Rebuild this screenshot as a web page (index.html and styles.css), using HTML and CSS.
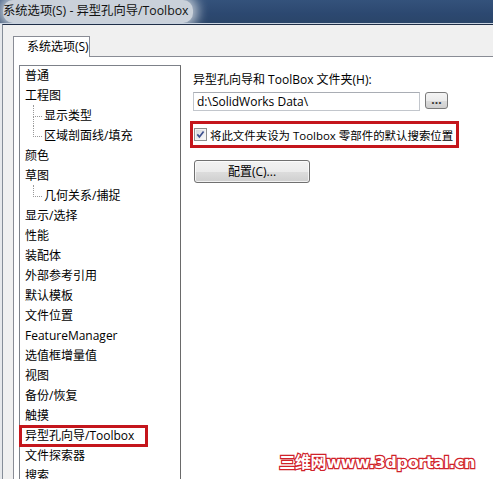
FILE: index.html
```html
<!DOCTYPE html>
<html lang="zh-CN">
<head>
<meta charset="utf-8">
<title>系统选项(S) - 异型孔向导/Toolbox</title>
<link rel="stylesheet" href="styles.css">
</head>
<body>
<div class="titlebar"><span class="title">系统选项(S) - 异型孔向导/Toolbox</span></div>
<div class="dialog">
  <div class="tabs"><div class="tab">系统选项(S)</div></div>
  <div class="panel">
    <ul class="tree">
      <li class="item">普通</li>
      <li class="item">工程图</li>
      <li class="item sub more">显示类型</li>
      <li class="item sub">区域剖面线/填充</li>
      <li class="item">颜色</li>
      <li class="item">草图</li>
      <li class="item sub">几何关系/捕捉</li>
      <li class="item">显示/选择</li>
      <li class="item">性能</li>
      <li class="item">装配体</li>
      <li class="item">外部参考引用</li>
      <li class="item">默认模板</li>
      <li class="item">文件位置</li>
      <li class="item">FeatureManager</li>
      <li class="item">选值框增量值</li>
      <li class="item">视图</li>
      <li class="item">备份/恢复</li>
      <li class="item">触摸</li>
      <li class="item marked">异型孔向导/Toolbox</li>
      <li class="item">文件探索器</li>
      <li class="item">搜索</li>
    </ul>
    <div class="settings">
      <div class="label">异型孔向导和 ToolBox 文件夹(H):</div>
      <div class="path-row">
        <div class="path-input">d:\SolidWorks Data\</div>
        <div class="browse">...</div>
      </div>
      <div class="check-box-row">
        <svg class="check" width="13" height="13" viewBox="0 0 13 13">
          <defs>
            <linearGradient id="cbg" x1="0" y1="0" x2="1" y2="1">
              <stop offset="0" stop-color="#d6d9de"/>
              <stop offset="1" stop-color="#fafafa"/>
            </linearGradient>
          </defs>
          <rect x="0.5" y="0.5" width="12" height="12" fill="#f4f4f4" stroke="#8e8f8f"/>
          <rect x="2" y="2" width="9" height="9" fill="url(#cbg)"/>
          <path d="M3.3 6.4 L5.4 8.9 L9.6 3.4" fill="none" stroke="#3c4f8e" stroke-width="1.7"/>
        </svg>
        <span class="check-text">将此文件夹设为 Toolbox 零部件的默认搜索位置</span>
      </div>
      <div class="config-btn">配置(C)...</div>
    </div>
  </div>
</div>
<div class="watermark">三维网www.3dportal.cn</div>
</body>
</html>
```
FILE: styles.css
```css
html, body {
  margin: 0;
  padding: 0;
}
body {
  width: 493px;
  height: 479px;
  overflow: hidden;
  background: #e6e8eb;
  font-family: "Open Sans", "Noto Sans CJK SC", sans-serif;
  font-size: 12px;
  color: #000;
  position: relative;
}
.titlebar {
  height: 23px;
  background: linear-gradient(180deg, #34527b 0%, #2c4870 60%, #2a4569 100%);
  border-bottom: 1px solid #c9d3e0;
  overflow: hidden;
}
.title {
  display: inline-block;
  margin-left: 3px;
  height: 23px;
  line-height: 22px;
  padding-right: 4px;
  color: #111;
  font-size: 12.3px;
  background: #cad1da;
  border-radius: 10px;
  box-shadow: 0 0 12px 5px rgba(202, 209, 218, 0.9);
}
.dialog {
  margin-left: 2px;
  border-left: 1px solid #858d98;
  border-top: 1px solid #1f2e47;
  background: #f0f0f0;
  height: 455px;
}
.tabs {
  display: flex;
  padding-top: 11px;
  padding-left: 10px;
}
.tab {
  position: relative;
  z-index: 1;
  box-sizing: border-box;
  width: 77px;
  height: 21px;
  padding-left: 13px;
  line-height: 20px;
  background: #fff;
  border: 1px solid #898c95;
  border-bottom: none;
  margin-bottom: -1px;
}
.panel {
  display: flex;
  margin-left: 10px;
  height: 430px;
  overflow: hidden;
  background: #fff;
  border-top: 1px solid #898c95;
  border-left: 1px solid #898c95;
}
.tree {
  list-style: none;
  margin: 8px 0 0 5px;
  padding: 0;
  box-sizing: border-box;
  width: 162px;
  height: 440px;
  flex: none;
  border: 1px solid #7d8189;
  border-right-color: #6a6a6a;
}
.item {
  position: relative;
  height: 20px;
  line-height: 20px;
  padding-left: 5px;
  white-space: nowrap;
}
.item.sub {
  padding-left: 24px;
}
.item.sub::before {
  content: "";
  position: absolute;
  left: 13px;
  top: -1px;
  width: 8px;
  height: 11px;
  border-left: 1px dotted #9a9a9a;
  border-bottom: 1px dotted #9a9a9a;
}
.item.sub.more::after {
  content: "";
  position: absolute;
  left: 13px;
  top: 10px;
  height: 10px;
  border-left: 1px dotted #9a9a9a;
}
.item.marked::after {
  content: "";
  position: absolute;
  left: -1px;
  top: -1px;
  width: 129px;
  height: 22px;
  box-sizing: border-box;
  border: 3px solid #c4161c;
}
.settings {
  margin-left: 12px;
  padding-top: 15px;
}
.label {
  line-height: 16px;
  white-space: nowrap;
}
.path-row {
  display: flex;
  margin-top: 4px;
}
.path-input {
  box-sizing: border-box;
  width: 227px;
  height: 19px;
  line-height: 17px;
  padding-left: 3px;
  border: 1px solid #c2c6cc;
  border-top-color: #a9adb4;
  background: #fff;
  white-space: nowrap;
}
.browse {
  box-sizing: border-box;
  width: 23px;
  height: 17px;
  margin-left: 5px;
  border: 1px solid #7a7a7a;
  border-radius: 3px;
  background: linear-gradient(180deg, #f4f4f4 0%, #ebebeb 50%, #dddddd 51%, #cfcfcf 100%);
  font-size: 12px;
  font-weight: bold;
  line-height: 13px;
  text-align: center;
  color: #333;
}
.check-box-row {
  display: flex;
  align-items: center;
  box-sizing: border-box;
  width: 269px;
  height: 27px;
  margin-top: 10px;
  margin-left: -3px;
  padding-left: 1px;
  border: 3px solid #c4161c;
}
.check {
  flex: none;
  display: block;
}
.check-text {
  margin-left: 3px;
  font-size: 11.45px;
  white-space: nowrap;
}
.config-btn {
  box-sizing: border-box;
  width: 116px;
  height: 23px;
  margin-top: 12px;
  margin-left: 1px;
  border: 1px solid #707070;
  border-radius: 3px;
  background: linear-gradient(180deg, #f2f2f2 0%, #ebebeb 50%, #dddddd 51%, #cfcfcf 100%);
  box-shadow: inset 0 0 0 1px rgba(255, 255, 255, 0.7);
  line-height: 21px;
  text-align: center;
}
.watermark {
  position: absolute;
  right: 18px;
  bottom: 7px;
  font-family: "DejaVu Sans", "Noto Sans CJK SC", sans-serif;
  font-weight: bold;
  font-size: 16px;
  line-height: 18px;
  letter-spacing: -0.3px;
  color: #fff;
  -webkit-text-stroke: 2.4px #d0222a;
  paint-order: stroke fill;
  white-space: nowrap;
}
```
